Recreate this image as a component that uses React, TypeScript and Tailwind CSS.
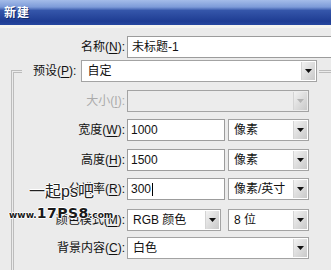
import React from "react";

const font = "font-['Liberation_Sans','Noto_Sans_CJK_SC',sans-serif]";

function Key({ k }: { k: string }) {
  return (
    <>
      (<span className="underline underline-offset-[2px]">{k}</span>):
    </>
  );
}

function Arrow({ disabled }: { disabled?: boolean }) {
  return (
    <div className="flex w-[14px] shrink-0 items-center justify-center border-l border-[#d4d4d4] bg-gradient-to-br from-[#f2f2f2] to-[#c9c9c9]">
      <svg width="7" height="4" viewBox="0 0 7 4">
        <path d="M0 0h7L3.5 4z" fill={disabled ? "#b4b4b4" : "#111"} />
      </svg>
    </div>
  );
}

function Select({ value, className, disabled }: { value?: string; className: string; disabled?: boolean }) {
  return (
    <div
      className={`flex h-[22px] shrink-0 border border-[#a3a3a3] ${disabled ? "bg-[#ececec]" : "bg-white"} ${className}`}
    >
      <span className="flex flex-1 items-center pl-[5px] text-[12px] text-[#111] whitespace-nowrap">{value}</span>
      <div className="flex p-[1px]">
        <Arrow disabled={disabled} />
      </div>
    </div>
  );
}

function Input({ value, className, caret }: { value: string; className: string; caret?: boolean }) {
  return (
    <div className={`flex h-[22px] shrink-0 items-center border border-[#9c9c9c] bg-white pl-[3px] text-[12px] text-[#111] ${className}`}>
      {value}
      {caret && <span className="ml-[1px] h-[13px] w-[1px] bg-black" />}
    </div>
  );
}

function Row({ label, mt, children, disabled }: { label: React.ReactNode; mt: string; children: React.ReactNode; disabled?: boolean }) {
  return (
    <div className={`flex items-center ${mt}`}>
      <div className={`w-[103px] shrink-0 text-right text-[12px] whitespace-nowrap ${disabled ? "text-[#ababab]" : "text-[#111]"}`}>
        {label}
      </div>
      <div className="ml-[2px] flex items-center">{children}</div>
    </div>
  );
}

export default function App() {
  return (
    <div className={`relative h-[270px] w-[331px] overflow-hidden bg-[#ebebeb] ${font}`}>
      {/* title bar */}
      <div className="flex h-[25px] items-center bg-[linear-gradient(to_bottom,#a4bce9_0%,#7d9bd8_28%,#3556aa_42%,#1f3d93_85%,#27479f_100%)] pl-[4px]">
        <span className="text-[12px] font-bold tracking-[1px] text-white [text-shadow:1px_1px_0_#102a6b]">新建</span>
      </div>
      <div className="h-[3px] bg-[#f5f4ef]" />

      <div className="pt-[8px]">
        <div className="flex items-center">
          <div className="w-[125px] shrink-0 text-right text-[12px] text-[#111]">
            名称<Key k="N" />
          </div>
          <Input value="未标题-1" className="ml-[2px] w-[220px] pl-[4px]" />
        </div>

        <fieldset className="ml-[11px] mt-[2px] border-l-[3px] border-t-[3px] border-double border-[#bcbcbc] pl-[8px]">
          <legend className="pr-[2px]">
            <div className="flex items-center">
              <span className="pl-[11px] text-[12px] text-[#111]">
                预设<Key k="P" />
              </span>
              <Select value="自定" className="ml-[5px] w-[236px]" />
            </div>
          </legend>

          <Row label={<>大小<Key k="I" /></>} mt="mt-[8px]" disabled>
            <Select className="w-[182px] h-[21px]" disabled />
          </Row>
          <Row label={<>宽度<Key k="W" /></>} mt="mt-[7px]">
            <Input value="1000" className="w-[98px]" />
            <Select value="像素" className="ml-[3px] w-[81px]" />
          </Row>
          <Row label={<>高度<Key k="H" /></>} mt="mt-[8px]">
            <Input value="1500" className="w-[98px]" />
            <Select value="像素" className="ml-[3px] w-[81px]" />
          </Row>
          <Row label={<>分辨率<Key k="R" /></>} mt="mt-[7px]">
            <Input value="300" className="w-[98px]" caret />
            <Select value="像素/英寸" className="ml-[3px] w-[81px]" />
          </Row>
          <Row label={<>颜色模式<Key k="M" /></>} mt="mt-[9px]">
            <Select value="RGB 颜色" className="w-[94px]" />
            <Select value="8 位" className="ml-[7px] w-[81px]" />
          </Row>
          <Row label={<>背景内容<Key k="C" /></>} mt="mt-[6px]">
            <Select value="白色" className="w-[182px]" />
          </Row>
          <div className="h-[20px]" />
        </fieldset>
      </div>

      {/* watermark */}
      <div className="absolute left-[29px] top-[184px] text-[16px] leading-none text-[#222] [text-shadow:1px_0_0_#fff,-1px_0_0_#fff,0_1px_0_#fff,0_-1px_0_#fff]">
        一起ps吧
      </div>
      <div className="absolute left-[9px] top-[206px] flex items-end font-['DejaVu_Sans',sans-serif] font-bold leading-none text-[#1a1a1a] [text-shadow:1px_0_0_#fff,-1px_0_0_#fff,0_1px_0_#fff,0_-1px_0_#fff]">
        <span className="text-[9px]">www.</span>
        <span className="text-[14px] tracking-[0.5px]">17PS8</span>
        <span className="text-[9px]">.com</span>
      </div>
    </div>
  );
}
